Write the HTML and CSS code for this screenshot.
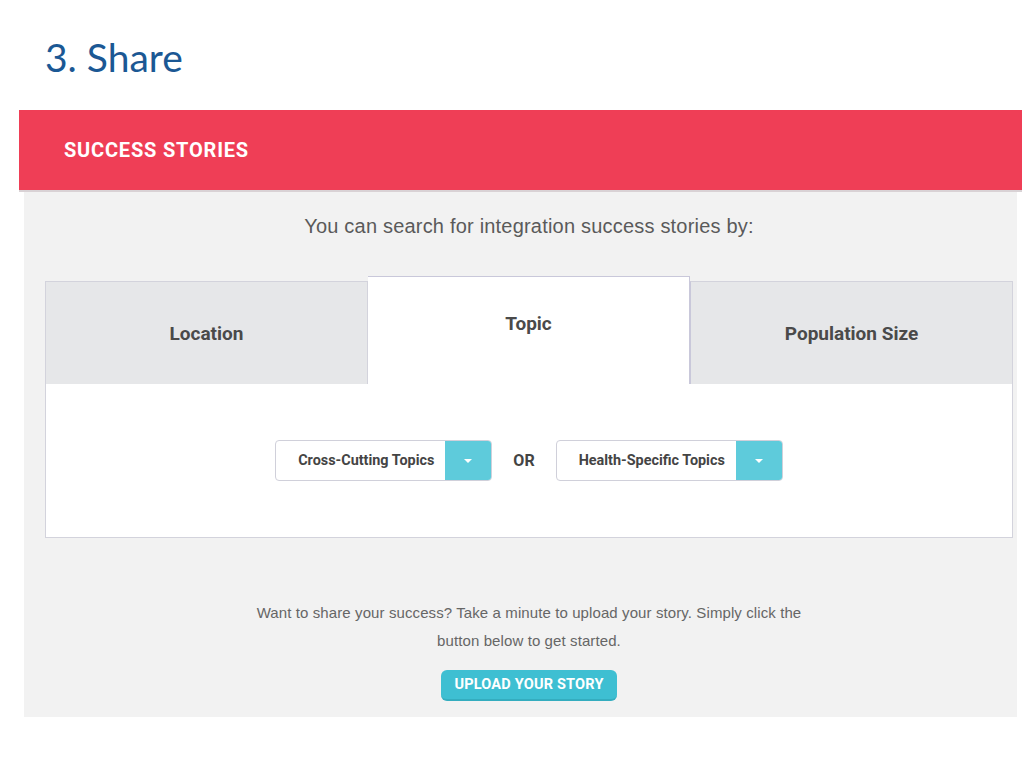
FILE: index.html
```html
<!DOCTYPE html>
<html lang="en">

<head>
    <meta charset="UTF-8">
    <meta name="viewport" content="width=device-width, initial-scale=1.0">
    <title>3. Share</title>
    <link rel="stylesheet" href="styles.css">
</head>

<body>
    <h1 class="page-title">3. Share</h1>

    <div class="stories">
        <div class="stories-header">
            <h2>SUCCESS STORIES</h2>
        </div>

        <div class="stories-body">
            <p class="intro">You can search for integration success stories by:</p>

            <div class="tabs">
                <div class="tab">Location</div>
                <div class="tab active">Topic</div>
                <div class="tab">Population Size</div>
            </div>

            <div class="tab-content">
                <div class="select">
                    <span class="select-label">Cross-Cutting Topics</span>
                    <span class="select-caret"></span>
                </div>
                <span class="or">OR</span>
                <div class="select">
                    <span class="select-label">Health-Specific Topics</span>
                    <span class="select-caret"></span>
                </div>
            </div>

            <div class="share">
                <p>Want to share your success? Take a minute to upload your story. Simply click the<br>button below to get started.</p>
                <button class="upload">UPLOAD YOUR STORY</button>
            </div>
        </div>
    </div>
</body>

</html>
```

FILE: styles.css
```css
* {
    margin: 0;
    padding: 0;
    box-sizing: border-box;
}

body {
    font-family: "Liberation Sans", Arial, sans-serif;
    background: #fff;
}

.page-title {
    font-family: Lato, "Open Sans", sans-serif;
    font-weight: 400;
    font-size: 39px;
    line-height: 39px;
    color: #1b5894;
    padding: 38px 0 0 45px;
}

.stories {
    margin: 33px 2px 0 19px;
}

.stories-header {
    background-color: #ef3e56;
    height: 82px;
    padding-left: 45px;
    display: flex;
    align-items: center;
    border-bottom: 2px solid #d9d2d5;
}

.stories-header h2,
.tab,
.select-label,
.or,
.upload {
    font-family: Roboto, "Liberation Sans", sans-serif;
    font-weight: 700;
}

.stories-header h2 {
    color: #fff;
    font-size: 20px;
    letter-spacing: 0.8px;
}

.stories-body {
    background-color: #f2f2f2;
    margin: 0 5px 0 5px;
    padding: 23px 4px 16px 21px;
}

.intro {
    text-align: center;
    font-size: 20px;
    letter-spacing: 0.2px;
    color: #5a5a5a;
    margin-bottom: 38px;
}

.tabs {
    display: flex;
    align-items: flex-end;
}

.tab {
    flex: 1;
    height: 103px;
    display: flex;
    align-items: center;
    justify-content: center;
    background-color: #e6e7e9;
    border: 1px solid #d3d3dc;
    border-bottom: none;
    font-size: 19px;
    color: #4a4a4a;
}

.tab.active {
    height: 108px;
    background-color: #fff;
    border-color: #c9c8da;
    padding-bottom: 14px;
}

.tab + .tab {
    border-left: none;
}

.tab.active + .tab {
    border-left: 1px solid #c9c8da;
}

.tab-content {
    height: 154px;
    background-color: #fff;
    border: 1px solid #d3d3dc;
    border-top: none;
    display: flex;
    align-items: center;
    justify-content: center;
    gap: 21px;
}

.select {
    display: flex;
    height: 41px;
    border: 1px solid #d0d0da;
    border-radius: 4px;
    overflow: hidden;
    background-color: #fff;
}

.select-label {
    display: flex;
    align-items: center;
    padding: 0 11px 0 22px;
    font-size: 14.4px;
    color: #444;
}

.select-caret {
    width: 46px;
    background-color: #5ecbdb;
    display: flex;
    align-items: center;
    justify-content: center;
}

.select-caret::after {
    content: "";
    border-left: 4px solid transparent;
    border-right: 4px solid transparent;
    border-top: 4px solid #fff;
}

.or {
    font-size: 16px;
    color: #444;
}

.share {
    text-align: center;
    padding-top: 61px;
}

.share p {
    font-size: 15px;
    letter-spacing: 0.1px;
    line-height: 28px;
    color: #666;
}

.upload {
    margin-top: 15px;
    background-color: #3ebfd2;
    color: #fff;
    border: none;
    border-bottom: 2px solid #34adbf;
    border-radius: 6px;
    height: 31px;
    padding: 0 13px;
    font-size: 14.5px;
    letter-spacing: 0.2px;
    cursor: pointer;
}
```
